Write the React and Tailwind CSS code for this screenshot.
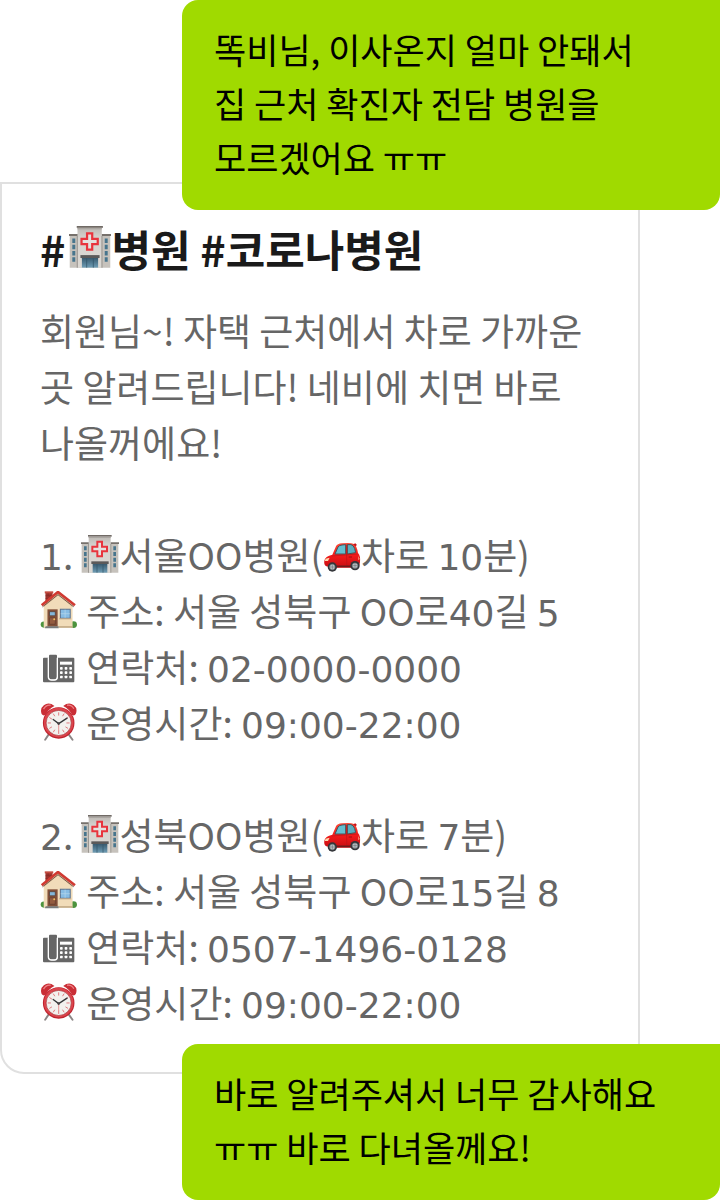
import React from "react";

function Hospital({ className = "h-[38px] w-[38px]" }) {
  return (
    <svg viewBox="0 0 114 114" className={`inline-block ${className}`} role="img" aria-label="병원">
      <defs>
        <linearGradient id="wall" x1="0" x2="0" y1="0" y2="1">
          <stop offset="0" stopColor="#bdb9b4" />
          <stop offset="0.25" stopColor="#d6d3cf" />
          <stop offset="1" stopColor="#dcd9d4" />
        </linearGradient>
        <linearGradient id="glass" x1="0" x2="0" y1="0" y2="1">
          <stop offset="0" stopColor="#34566b" />
          <stop offset="1" stopColor="#6f9db5" />
        </linearGradient>
      </defs>
      <path d="M2 26H112V113H2z" fill="#c6c2bc" />
      <path d="M0 22H25V27H0zM88 22H114V27H88z" fill="#77716c" />
      <path d="M23 5H89V113H23z" fill="url(#wall)" />
      <path d="M21 0H92V5H21z" fill="#706a65" />
      <path d="M23 5H89V9H23z" fill="#aaa6a1" />
      <path d="M21 27h3v86h-3zM88 27h3v86h-3z" fill="#9c9893" />
      <g fill="#47758d">
        <path d="M9 34h8v12H9zM9 51h8v12H9zM9 68h8v12H9zM9 85h8v12H9zM97 34h8v12h-8zM97 51h8v12h-8zM97 68h8v12h-8zM97 85h8v12h-8z" />
      </g>
      <path d="M35 85H79V113H35z" fill="url(#glass)" />
      <path d="M31 79H83V87H31z" fill="#5b5a5a" />
      <path d="M48 88v25M66 88v25" stroke="#315468" strokeWidth="2" />
      <path d="M49 20h14v15h15v14H63v15H49V49H34V35h15z" fill="#e4e1df" stroke="#e8343d" strokeWidth="6" />
    </svg>
  );
}

function Car() {
  return (
    <svg viewBox="0 -23 114 114" className="inline-block h-[38px] w-[38px]" role="img" aria-label="자동차">
      <defs>
        <linearGradient id="paint" x1="0" x2="0" y1="0" y2="1">
          <stop offset="0" stopColor="#ff4a38" />
          <stop offset="0.5" stopColor="#f21b1b" />
          <stop offset="1" stopColor="#c80c12" />
        </linearGradient>
      </defs>
      <path d="M10 71Q2 67 4 54Q6 41 28 36L39 11Q43 3 57 2Q82-1 93 4Q101 8 105 31Q113 39 111 59L108 70L94 75H27z" fill="url(#paint)" />
      <path d="M36 34L45 13Q48 8 57 7L68 6V34z" fill="#63bfd0" stroke="#47545a" strokeWidth="3" />
      <path d="M73 6Q86 4 90 9Q96 15 98 30L73 34z" fill="#59afc0" stroke="#4d5052" strokeWidth="3" />
      <path d="M91 5l6-3 5 5-5 4z" fill="#c8151b" />
      <path d="M71 6V68M26 40Q55 38 104 34" stroke="#bb1519" strokeWidth="2" fill="none" />
      <path d="M77 43h10" stroke="#9d1014" strokeWidth="3" />
      <path d="M8 48l12-3-5 10H5z" fill="#ffd8ad" />
      <path d="M106 40l4 9-4 4z" fill="#ffad87" />
      <path d="M41 71H84" stroke="#6e1a1a" strokeWidth="5" />
      <g fill="#34363a"><circle cx="28" cy="73" r="14" /><circle cx="96" cy="69" r="14" /></g>
      <g fill="#c3c8cc" stroke="#7a7d80" strokeWidth="2"><circle cx="28" cy="73" r="8" /><circle cx="96" cy="69" r="8" /></g>
      <path d="M28 66v14M21 73h14M96 62v14M89 69h14" stroke="#6d7176" strokeWidth="2" />
    </svg>
  );
}

function House() {
  return (
    <svg viewBox="0 0 108 112" className="inline-block h-[38px] w-[38px]" role="img" aria-label="집">
      <path d="M14 3H35V35H14z" fill="#9f342e" />
      <path d="M12 1H37V7H12z" fill="#c34c40" />
      <path d="M14 14h21M14 22h21M22 7v7M28 14v8" stroke="#792421" strokeWidth="1.5" />
      <g fill="#4c933e"><circle cx="9" cy="99" r="9" /><circle cx="97" cy="99" r="10" /></g>
      <path d="M9 42L52 4L94 42V108H9z" fill="#f1dcb9" />
      <path d="M9 45L52 10L94 45" fill="none" stroke="#c9ab84" strokeWidth="3" />
      <path d="M3 42L51 3L101 42" fill="none" stroke="#d03a32" strokeWidth="8" strokeLinejoin="round" />
      <path d="M5 47L51 11L98 47" fill="none" stroke="#54302b" strokeWidth="2" />
      <path d="M20 54H50V105H20z" fill="#825039" />
      <path d="M26 61H43V73H26z" fill="#83b6d8" stroke="#51362b" strokeWidth="2" />
      <path d="M26 79H43V98H26z" fill="#935b40" stroke="#603c2c" strokeWidth="2" />
      <circle cx="40" cy="83" r="3" fill="#eec05e" />
      <path d="M58 54H87V80H58z" fill="#87bce4" stroke="#59718e" strokeWidth="3" />
      <path d="M72 55V79M59 67H86" stroke="#b6d7ec" strokeWidth="2" />
      <path d="M54 82H90" stroke="#c5aa86" strokeWidth="3" />
      <path d="M15 104H53V110H12z" fill="#777b7d" />
      <path d="M53 106H94" stroke="#b9a07c" strokeWidth="4" />
    </svg>
  );
}

function Fax() {
  return (
    <svg viewBox="-3 9 114 114" className="inline-block h-[38px] w-[38px]" role="img" aria-label="전화">
      <g transform="translate(0 16)">
        <path d="M9 25h13V83q0 10 10 10h8q10 0 10-10V25h47q3 0 3 3v68q0 3-3 3H9q-3 0-3-3V28q0-3 3-3z" fill="#666" />
        <path d="M27 16h18q3 0 3 4v63q0 8-8 8h-8q-8 0-8-8V20q0-4 3-4z" fill="#666" />
        <path d="M22 25V83q0 9 10 9h8q9 0 9-9V25" fill="none" stroke="#fff" strokeWidth="4" />
        <g fill="#fff">
          <path d="M57 37H93V46H57z" />
          <rect x="57" y="53" width="8" height="8" rx="2" /><rect x="71" y="53" width="8" height="8" rx="2" /><rect x="85" y="53" width="8" height="8" rx="2" />
          <rect x="57" y="66" width="8" height="8" rx="2" /><rect x="71" y="66" width="8" height="8" rx="2" /><rect x="85" y="66" width="8" height="8" rx="2" />
          <rect x="57" y="79" width="8" height="8" rx="2" /><rect x="71" y="79" width="8" height="8" rx="2" /><rect x="85" y="79" width="8" height="8" rx="2" />
        </g>
      </g>
    </svg>
  );
}

function Clock() {
  return (
    <svg viewBox="0 0 114 118" className="inline-block h-[38px] w-[38px]" role="img" aria-label="알람 시계">
      <path d="M24 99L14 114M88 99L99 114" stroke="#8b8585" strokeWidth="6" strokeLinecap="round" />
      <path d="M3 34Q-3 17 10 7Q25-5 43 9Q26 17 15 37Q8 41 3 34zM109 34Q116 17 103 7Q88-5 70 9Q87 17 98 37Q105 41 109 34z" fill="#c92e36" />
      <path d="M9 19Q17 5 31 7M82 7Q96 5 103 18" stroke="#ef8386" strokeWidth="4" fill="none" />
      <circle cx="56" cy="62" r="49" fill="#bd222c" />
      <circle cx="56" cy="61" r="46" fill="#dc444c" />
      <circle cx="56" cy="62" r="39" fill="#f3f1ee" stroke="#9e3035" strokeWidth="2" />
      <path d="M56 29v10M56 86v10M22 62h10M80 62h10M39 33l5 8M73 33l-5 8M27 45l8 5M85 45l-8 5M27 79l8-5M85 79l-8-5M39 91l5-8M73 91l-5-8" stroke="#df777b" strokeWidth="3" />
      <path d="M39 51L56 64L82 47" stroke="#343638" strokeWidth="4" fill="none" strokeLinecap="round" />
      <path d="M56 64V87" stroke="#e16565" strokeWidth="2" />
      <circle cx="56" cy="64" r="4" fill="#464244" />
    </svg>
  );
}

function Num({ children }) {
  return <span className="font-['DejaVu_Sans',sans-serif] text-[36px] leading-none">{children}</span>;
}

function Bubble({ className, children }) {
  return (
    <p className={`relative z-10 ml-[182px] rounded-l-2xl rounded-br-2xl bg-[#a0da00] px-8 pt-[22px] pb-[26px] text-[35px] leading-[54px] text-black break-keep ${className}`}>
      {children}
    </p>
  );
}

function Entry({ index, name, minutes, address, unit, phone, hours }) {
  return (
    <li className="[&_svg]:-mt-3 [&_svg]:align-middle">
      <p><Num>{index}</Num>. <Hospital />{name}(<Car />차로 <Num>{minutes}</Num>분)</p>
      <p><House /> 주소: 서울 성북구 OO로<Num>{address}</Num>길 <Num>{unit}</Num></p>
      <p><Fax /> 연락처: <Num>{phone}</Num></p>
      <p><Clock /> 운영시간: <Num>{hours}</Num></p>
    </li>
  );
}

const hospitals = [
  { index: "1", name: "서울OO병원", minutes: "10", address: "40", unit: "5", phone: "02-0000-0000", hours: "09:00-22:00" },
  { index: "2", name: "성북OO병원", minutes: "7", address: "15", unit: "8", phone: "0507-1496-0128", hours: "09:00-22:00" },
];

export default function App() {
  return (
    <main className="bg-white font-['Noto_Sans_CJK_KR',sans-serif]">
      <Bubble className="mt-0">
        똑비님, 이사온지 얼마 안돼서<br />집 근처 확진자 전담 병원을<br />모르겠어요 ㅠㅠ
      </Bubble>
      <article className="-mt-7 mr-20 rounded-b-3xl border-2 border-[#e0e0e0] px-[38px] pt-9 pb-[42px]">
        <h1 className="mb-[26px] text-[43px] leading-[56px] font-bold text-[#1a1a1a]">
          #<Hospital className="-mt-4 ml-1 h-11 w-[42px] align-middle" />병원 #코로나병원
        </h1>
        <div className="text-[37px] leading-[56px] text-[#666]">
          <p className="break-keep">
            회원님~! 자택 근처에서 차로 가까운<br />곳 알려드립니다! 네비에 치면 바로<br />나올꺼에요!
          </p>
          <ol className="mt-14 flex flex-col gap-14">
            {hospitals.map((h) => <Entry key={h.index} {...h} />)}
          </ol>
        </div>
      </article>
      <Bubble className="-mt-[30px]">
        바로 알려주셔서 너무 감사해요<br />ㅠㅠ 바로 다녀올께요!
      </Bubble>
    </main>
  );
}
